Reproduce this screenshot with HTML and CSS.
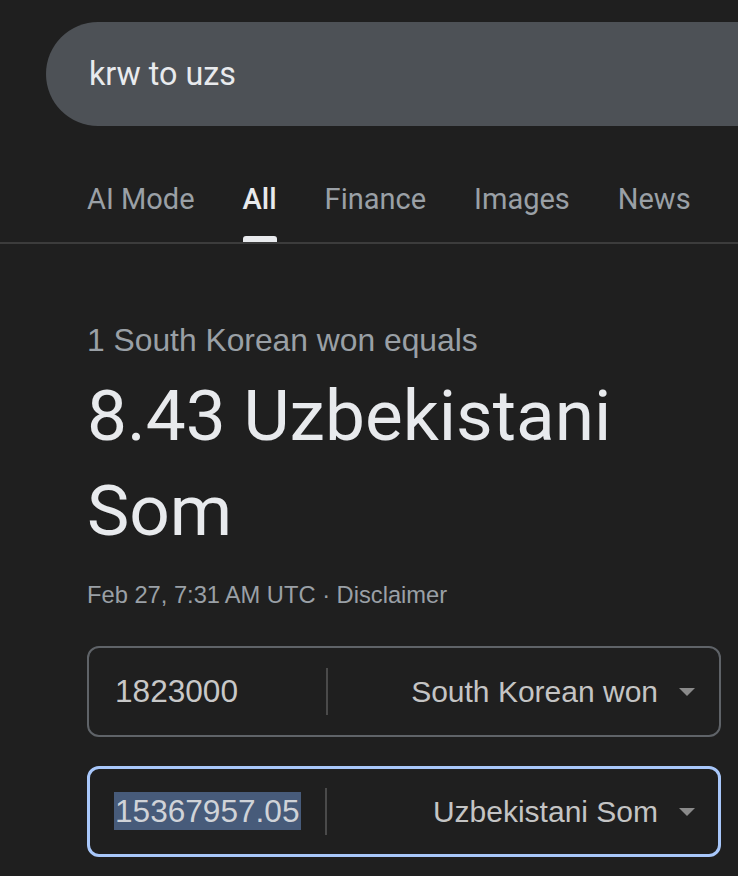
FILE: index.html
```html
<!DOCTYPE html>
<html lang="en">
<head>
<meta charset="utf-8">
<title>krw to uzs</title>
<link rel="stylesheet" href="styles.css">
</head>
<body>
  <div class="search">
    <span class="query">krw to uzs</span>
  </div>
  <nav class="tabs">
    <div class="tab"><span class="tab-label">AI Mode</span><span class="tab-bar"></span></div>
    <div class="tab active"><span class="tab-label">All</span><span class="tab-bar"></span></div>
    <div class="tab"><span class="tab-label">Finance</span><span class="tab-bar"></span></div>
    <div class="tab"><span class="tab-label">Images</span><span class="tab-bar"></span></div>
    <div class="tab"><span class="tab-label">News</span><span class="tab-bar"></span></div>
  </nav>
  <main class="content">
    <div class="equals">1 South Korean won equals</div>
    <div class="result">8.43 Uzbekistani Som</div>
    <div class="meta">Feb 27, 7:31&#8239;AM UTC · Disclaimer</div>
    <div class="field">
      <div class="value">1823000</div>
      <div class="sep"></div>
      <div class="currency">South Korean won</div>
      <div class="arrow"></div>
    </div>
    <div class="field focused">
      <div class="value"><span class="selected">15367957.05</span></div>
      <div class="sep"></div>
      <div class="currency">Uzbekistani Som</div>
      <div class="arrow"></div>
    </div>
  </main>
</body>
</html>
```
FILE: styles.css
```css
html, body {
  margin: 0;
  padding: 0;
  background: #1f1f1f;
  overflow: hidden;
}
body {
  width: 738px;
  height: 876px;
  font-family: Roboto, "Liberation Sans", Arial, sans-serif;
}
.search {
  margin: 22px 0 0 46px;
  height: 104px;
  background: #4d5156;
  border-radius: 52px 0 0 52px;
  display: flex;
  align-items: center;
  padding-left: 43px;
}
.query {
  font-family: Roboto, sans-serif;
  font-size: 32.3px;
  color: #e8eaed;
  line-height: 40px;
  margin-top: 0;
}
.tabs {
  display: flex;
  gap: 48px;
  padding-left: 87px;
  margin-top: 55px;
  border-bottom: 2px solid #3c3c3c;
}
.tab {
  display: flex;
  flex-direction: column;
  align-items: stretch;
}
.tab-label {
  font-family: Roboto, sans-serif;
  font-size: 29px;
  line-height: 36px;
  color: #9aa0a6;
  white-space: nowrap;
}
.tab-bar {
  height: 6px;
  margin-top: 19px;
  border-radius: 3px 3px 0 0;
}
.tab.active .tab-label {
  color: #e8eaed;
  font-weight: 500;
}
.tab.active .tab-bar {
  background: #e8eaed;
}
.content {
  padding: 0 17px 0 87px;
}
.equals {
  margin-top: 76px;
  font-family: "Liberation Sans", Arial, sans-serif;
  font-size: 31.8px;
  line-height: 40px;
  color: #9aa0a6;
}
.result {
  margin-top: 8px;
  font-family: Roboto, sans-serif;
  font-size: 71.2px;
  line-height: 95px;
  color: #e8eaed;
}
.meta {
  margin-top: 22px;
  font-family: "Liberation Sans", Arial, sans-serif;
  font-size: 23.7px;
  line-height: 30px;
  color: #9aa0a6;
}
.field {
  margin-top: 36px;
  box-sizing: border-box;
  height: 91px;
  border: 2px solid #5f6368;
  border-radius: 12px;
  display: flex;
  align-items: center;
  font-family: "Liberation Sans", Arial, sans-serif;
}
.field.focused {
  margin-top: 29px;
  border: 3px solid #a8c7fa;
}
.value {
  width: 211px;
  padding-left: 26px;
  font-size: 31.6px;
  color: #c8c8c8;
  white-space: nowrap;
}
.focused .value {
  width: 211px;
  padding-left: 24px;
}
.selected {
  background: #475b7a;
  color: #d0d3d8;
  padding: 1px 1px;
}
.sep {
  width: 2px;
  height: 47px;
  background: #4a4a4a;
}
.currency {
  flex: 1;
  text-align: right;
  font-size: 30px;
  color: #c4c4c4;
  white-space: nowrap;
}
.arrow {
  width: 0;
  height: 0;
  border-left: 8.5px solid transparent;
  border-right: 8.5px solid transparent;
  border-top: 8.5px solid #8a8a8a;
  margin: 0 24px 0 21px;
}
.focused .arrow {
  margin-right: 23px;
}
```
